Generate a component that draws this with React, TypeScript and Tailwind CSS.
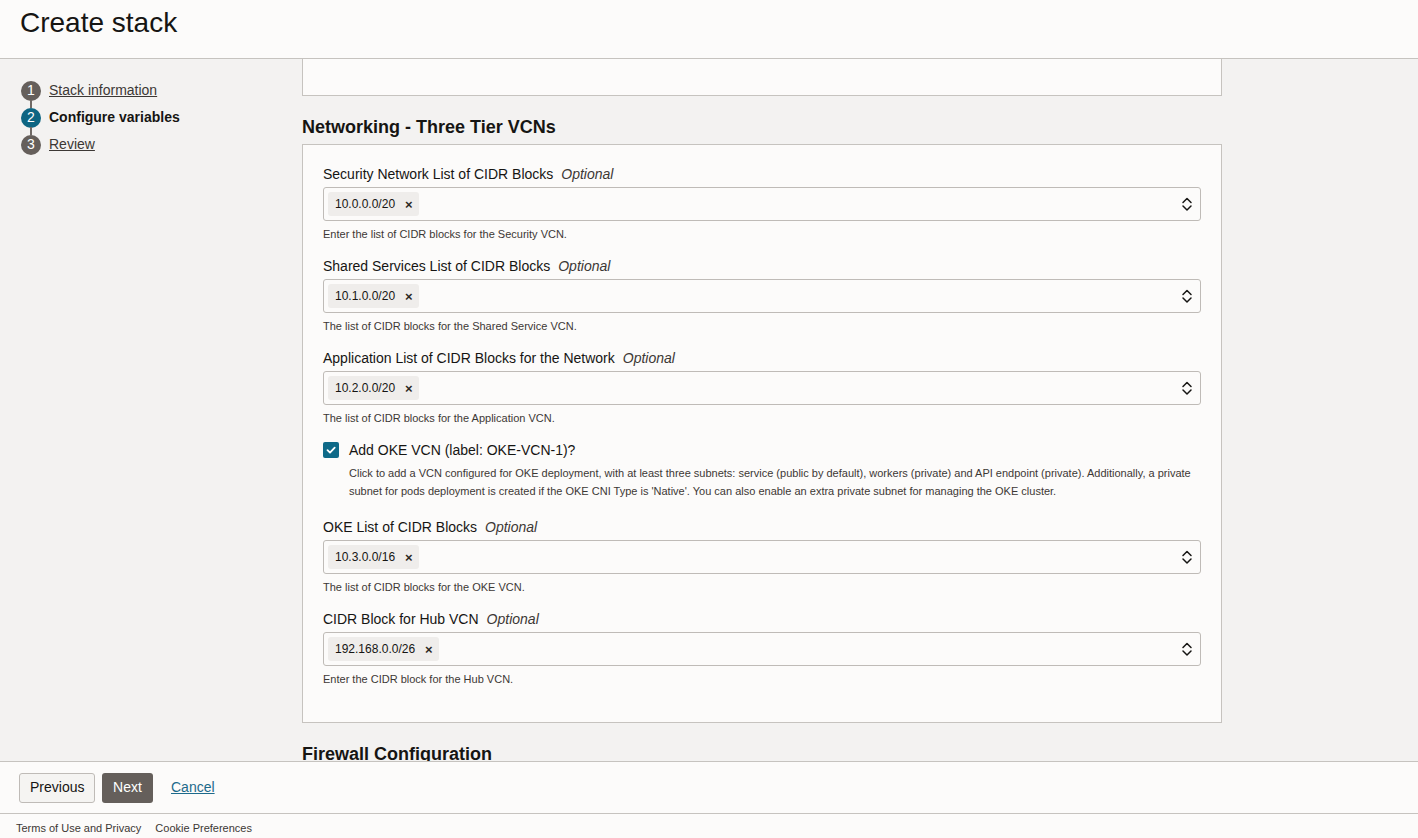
import React from "react";

const fields = [
  { label: "Security Network List of CIDR Blocks", value: "10.0.0.0/20", help: "Enter the list of CIDR blocks for the Security VCN." },
  { label: "Shared Services List of CIDR Blocks", value: "10.1.0.0/20", help: "The list of CIDR blocks for the Shared Service VCN." },
  { label: "Application List of CIDR Blocks for the Network", value: "10.2.0.0/20", help: "The list of CIDR blocks for the Application VCN." },
];

const okeFields = [
  { label: "OKE List of CIDR Blocks", value: "10.3.0.0/16", help: "The list of CIDR blocks for the OKE VCN." },
  { label: "CIDR Block for Hub VCN", value: "192.168.0.0/26", help: "Enter the CIDR block for the Hub VCN." },
];

function UpDown() {
  return (
    <svg width="12" height="16" viewBox="0 0 12 16" fill="none" stroke="#161513" strokeWidth="1.5" strokeLinecap="round" strokeLinejoin="round">
      <path d="M2 6.5 L6 2.5 L10 6.5" />
      <path d="M2 10 L6 14 L10 10" />
    </svg>
  );
}

function Field({ label, value, help }: { label: string; value: string; help: string }) {
  return (
    <div className="flex flex-col pb-[14px]">
      <label className="text-[14px] leading-[20px] text-[#161513]">
        {label}
        <span className="ml-[8px] italic text-[#3c3835]">Optional</span>
      </label>
      <div className="mt-[3px] h-[34px] flex items-center justify-between border border-[#bfbbb7] rounded-[3px] bg-[#fcfbfa] pl-[4px] pr-[7px]">
        <span className="h-[24px] flex items-center gap-[10px] bg-[#efedeb] rounded-[3px] pl-[7px] pr-[6px] text-[12px] text-[#161513]">
          {value}
          <span className="text-[13px] font-bold leading-none text-[#2b2825]">×</span>
        </span>
        <UpDown />
      </div>
      <p className="mt-[5px] text-[11px] leading-[16px] text-[#3c3835]">{help}</p>
    </div>
  );
}

const steps = [
  { n: 1, label: "Stack information", active: false },
  { n: 2, label: "Configure variables", active: true },
  { n: 3, label: "Review", active: false },
];

export default function App() {
  return (
    <div className="h-screen flex flex-col overflow-hidden font-['Liberation_Sans',Arial,sans-serif] text-[#161513] bg-[#f3f2f1]">
      {/* Header */}
      <header className="h-[59px] shrink-0 border-b border-[#c6c3bf] bg-[#fcfbfa] flex items-start pl-[20px] pt-[6px]">
        <h1 className="text-[28px] leading-[34px] text-[#161513]">Create stack</h1>
      </header>

      {/* Main */}
      <div className="flex-1 flex overflow-hidden">
        <nav className="w-[302px] shrink-0 pl-[21px] pt-[18px]">
          <ol className="flex flex-col">
            {steps.map((s, i) => (
              <li key={s.n} className="relative flex items-center h-[27px]">
                {i > 0 && <span className="absolute left-[9px] top-[-4px] h-[8px] w-[2px] bg-[#6f6965]" />}
                <span
                  className={`w-[20px] h-[20px] rounded-full flex items-center justify-center text-[14px] text-white ${
                    s.active ? "bg-[#0d6582]" : "bg-[#655f5b]"
                  }`}
                >
                  {s.n}
                </span>
                <span
                  className={`ml-[8px] text-[14px] ${
                    s.active ? "font-bold text-[#161513]" : "underline text-[#3c3835]"
                  }`}
                >
                  {s.label}
                </span>
              </li>
            ))}
          </ol>
        </nav>

        <main className="w-[920px] shrink-0">
          <div className="h-[37px] border border-t-0 border-[#c6c3bf] bg-[#fcfbfa]" />

          <h2 className="mt-[19px] mb-[5px] text-[18px] leading-[24px] font-bold">Networking - Three Tier VCNs</h2>

          <section className="border border-[#c6c3bf] bg-[#fcfbfa] px-[20px] pt-[19px] pb-[21px]">
            {fields.map((f) => (
              <Field key={f.label} {...f} />
            ))}

            <div className="flex items-start pb-[17px]">
              <span className="mt-[2px] w-[16px] h-[16px] rounded-[2px] bg-[#0f6a88] flex items-center justify-center shrink-0">
                <svg width="12" height="12" viewBox="0 0 12 12" fill="none" stroke="white" strokeWidth="1.8" strokeLinecap="round" strokeLinejoin="round">
                  <path d="M2.5 6.2 L5 8.6 L9.7 3.6" />
                </svg>
              </span>
              <div className="ml-[10px] flex flex-col">
                <span className="text-[14px] leading-[20px]">Add OKE VCN (label: OKE-VCN-1)?</span>
                <p className="mt-[4px] text-[11px] leading-[18px] text-[#3c3835]">
                  Click to add a VCN configured for OKE deployment, with at least three subnets: service (public by default), workers (private) and API endpoint (private). Additionally, a private subnet for pods deployment is created if the OKE CNI Type is 'Native'. You can also enable an extra private subnet for managing the OKE cluster.
                </p>
              </div>
            </div>

            {okeFields.map((f) => (
              <Field key={f.label} {...f} />
            ))}
          </section>

          <h2 className="mt-[19px] text-[18px] leading-[24px] font-bold">Firewall Configuration</h2>
        </main>
      </div>

      {/* Footer buttons */}
      <div className="h-[52px] shrink-0 border-t border-[#c6c3bf] bg-[#fcfbfa] flex items-center pl-[19px]">
        <button className="h-[30px] px-[10px] w-[76px] border border-[#bfbbb7] rounded-[3px] bg-[#f5f4f2] text-[14px] text-[#161513]">
          Previous
        </button>
        <button className="ml-[7px] h-[30px] w-[51px] rounded-[3px] bg-[#655f5b] text-[14px] text-white">
          Next
        </button>
        <a className="ml-[18px] text-[14px] text-[#1d6a8b] underline">Cancel</a>
      </div>

      {/* Bottom strip */}
      <div className="h-[25px] shrink-0 border-t border-[#c6c3bf] bg-[#fcfbfa] flex items-start pt-[7px] pl-[16px] gap-[14px] text-[11px] leading-[14px] text-[#3c3835]">
        <span>Terms of Use and Privacy</span>
        <span>Cookie Preferences</span>
      </div>
    </div>
  );
}
